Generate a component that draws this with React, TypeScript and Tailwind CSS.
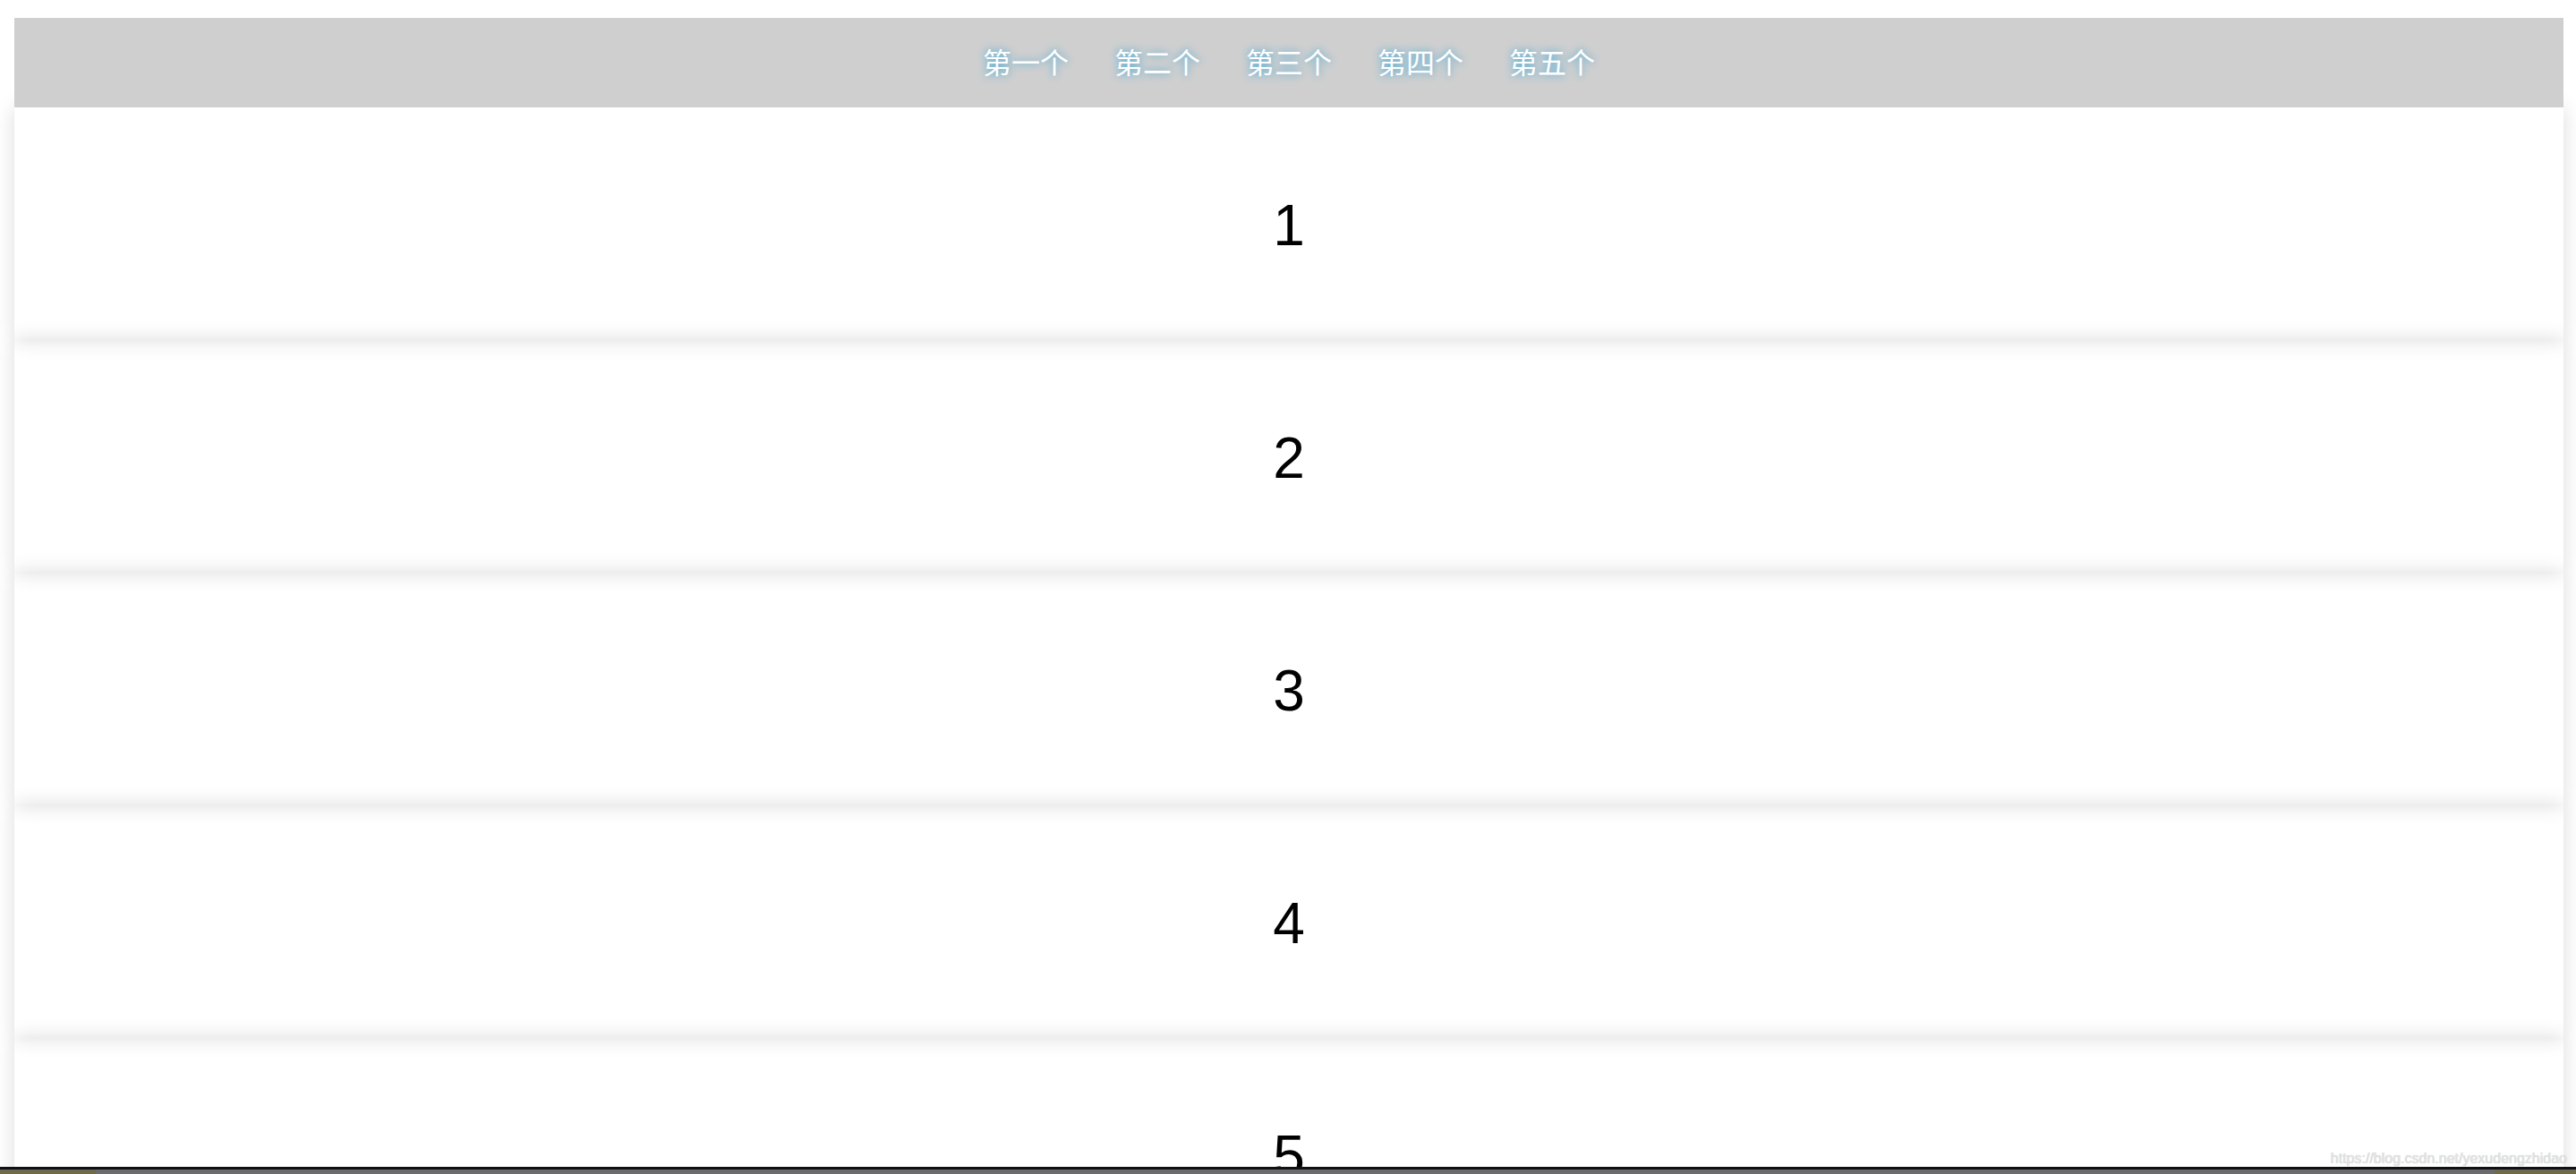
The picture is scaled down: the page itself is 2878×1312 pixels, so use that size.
import React from "react";

const navItems = ["第一个", "第二个", "第三个", "第四个", "第五个"];
const sections = ["1", "2", "3", "4", "5"];

export default function App() {
  return (
    <div className="relative w-[2878px] h-[1312px] overflow-hidden bg-white flex flex-col">
      <div className="h-[1304px] flex flex-col overflow-hidden">
        <div className="h-[20px] shrink-0" />
        <header className="relative z-10 ml-4 w-[2848px] h-[100px] shrink-0 bg-[#cfcfcf] flex items-center justify-center gap-[51px] pb-[4px]">
          {navItems.map((t) => (
            <span
              key={t}
              className="text-white text-[32px] leading-none [text-shadow:0_0_10px_#3aa6d6] [font-family:'Noto_Sans_CJK_SC','Noto_Sans',sans-serif]"
            >
              {t}
            </span>
          ))}
        </header>
        {sections.map((n) => (
          <section
            key={n}
            className="ml-4 w-[2848px] h-[260px] shrink-0 flex items-center justify-center pt-[4px] shadow-[0_0_22px_rgba(0,0,0,0.14)]"
          >
            <span className="text-[64px] leading-none text-black [font-family:'Liberation_Sans',Arial,sans-serif]">
              {n}
            </span>
          </section>
        ))}
      </div>
      <div className="h-[3px] bg-[#101114] shrink-0" />
      <div className="h-[5px] bg-[#6b6b6b] shrink-0 flex">
        <div className="w-[107px] bg-[#6f6a4e]" />
        <div className="flex-1" />
        <div className="w-[91px] bg-[#6f6a4e]" />
      </div>
      <div className="absolute right-[10px] bottom-[9px] text-[16px] leading-none text-[#e4e4e4] [text-shadow:0_0_1px_#b8b8b8] [font-family:'Liberation_Sans',Arial,sans-serif]">
        https://blog.csdn.net/yexudengzhidao
      </div>
    </div>
  );
}
